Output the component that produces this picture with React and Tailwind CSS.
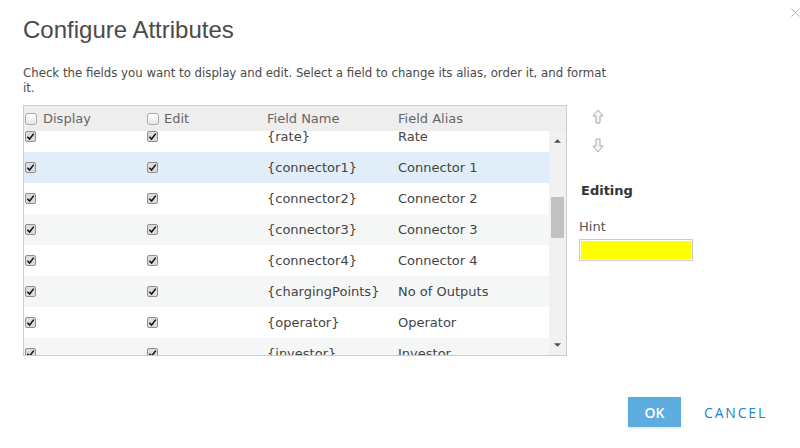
import { X } from 'lucide-react'

const FONT = { fontFamily: '"DejaVu Sans", Verdana, sans-serif' }

const ROWS = [
  { name: '{rate}', alias: 'Rate' },
  { name: '{connector1}', alias: 'Connector 1', selected: true },
  { name: '{connector2}', alias: 'Connector 2' },
  { name: '{connector3}', alias: 'Connector 3' },
  { name: '{connector4}', alias: 'Connector 4' },
  { name: '{chargingPoints}', alias: 'No of Outputs' },
  { name: '{operator}', alias: 'Operator' },
  { name: '{investor}', alias: 'Investor' },
]

function Check({ checked }) {
  if (!checked) {
    return <span className="inline-block h-[12px] w-[12px] rounded-[3px] border border-[#a9a9a9] bg-gradient-to-b from-white to-[#e9e9e9]" />
  }
  return (
    <span className="flex h-[11px] w-[11px] items-center justify-center rounded-[2px] border border-[#8f8f8f] bg-[#dcdcdc]">
      <svg viewBox="0 0 10 10" className="h-[9px] w-[9px]">
        <path d="M1.5 5.2 L4 7.8 L8.6 1.8" fill="none" stroke="#111" strokeWidth="1.7" />
      </svg>
    </span>
  )
}

function Arrow({ down }) {
  return (
    <svg viewBox="0 0 12 15" className={`h-[15px] w-[12px] ${down ? 'rotate-180' : ''}`}>
      <path d="M6 1 L11 7 H8 V14 H4 V7 H1 Z" fill="#f4f4f4" stroke="#a8a8a8" strokeWidth="1" />
    </svg>
  )
}

export default function App() {
  return (
    <div className="relative h-[448px] w-[800px] overflow-hidden bg-white text-[#444]" style={FONT}>
      <X aria-hidden="true" className="absolute left-[788px] top-[5px] h-[15px] w-[15px] text-[#9a9a9a]" strokeWidth={1.2} />

      <h1 className="pl-[23px] pt-[16px] text-[24px] leading-[28px] text-[#4a4a4a]" style={{ fontFamily: '"Liberation Sans", Arial, sans-serif' }}>
        Configure Attributes
      </h1>

      <p className="mt-[22px] w-[612px] pl-[23px] text-[11.75px] leading-[15px] text-[#4a4a4a]">
        Check the fields you want to display and edit. Select a field to change its alias, order it, and format it.
      </p>

      <div className="mt-[9px] flex pl-[23px]">
        <div className="h-[251px] w-[544px] border border-[#cccccc]">
          <div className="flex h-[25px] items-center bg-[#eeeeee] text-[13px] text-[#666]">
            <div className="flex w-[123px] items-center gap-[6px] pl-[1px]">
              <Check />
              <span>Display</span>
            </div>
            <div className="flex w-[120px] items-center gap-[5px]">
              <Check />
              <span>Edit</span>
            </div>
            <div className="w-[131px]">Field Name</div>
            <div>Field Alias</div>
          </div>

          <div className="flex h-[224px] overflow-hidden">
            <div className="flex-1 overflow-hidden">
              <div className="-mt-[10px]">
                {ROWS.map((r, i) => (
                  <div
                    key={r.name}
                    className={`flex h-[31px] items-center text-[13px] text-[#444] ${
                      r.selected ? 'bg-[#e1eef9]' : i % 2 ? 'bg-[#f5f7f7]' : 'bg-white'
                    }`}
                  >
                    <div className="w-[123px] pl-[1px]">
                      <Check checked />
                    </div>
                    <div className="w-[120px]">
                      <Check checked />
                    </div>
                    <div className="w-[131px]">{r.name}</div>
                    <div>{r.alias}</div>
                  </div>
                ))}
              </div>
            </div>
            <div className="relative w-[17px] bg-[#f1f1f1]">
              <svg viewBox="0 0 8 4" className="absolute left-[5px] top-[8px] h-[4px] w-[7px]">
                <path d="M0 4 L4 0 L8 4 Z" fill="#505050" />
              </svg>
              <div className="absolute left-[2px] top-[66px] h-[41px] w-[13px] bg-[#c1c1c1]" />
              <svg viewBox="0 0 8 4" className="absolute bottom-[8px] left-[5px] h-[4px] w-[7px]">
                <path d="M0 0 L4 4 L8 0 Z" fill="#505050" />
              </svg>
            </div>
          </div>
        </div>

        <div className="pl-[12px]">
          <div className="flex flex-col gap-[14px] pl-[13px] pt-[4px]">
            <Arrow />
            <Arrow down />
          </div>
          <div className="mt-[28px] pl-[2px] text-[13px] font-bold text-[#333]">Editing</div>
          <div className="mt-[16px] text-[13px] text-[#555]">Hint</div>
          <div className="mt-[3px] h-[22px] w-[114px] border border-[#cccccc] p-[1px]">
            <div className="h-full w-[110px] bg-[#ffff00]" />
          </div>
        </div>
      </div>

      <div className="mt-[41px] flex items-center justify-end gap-[23px] pr-[33px]">
        <button className="h-[30px] w-[53px] bg-[#5dade0] text-[14px] font-semibold text-white shadow-sm" style={{ fontFamily: '"Open Sans", sans-serif' }}>
          OK
        </button>
        <button className="text-[14px] tracking-[1.8px] text-[#1a84c7]" style={{ fontFamily: '"Open Sans", sans-serif' }}>
          CANCEL
        </button>
      </div>
    </div>
  )
}
